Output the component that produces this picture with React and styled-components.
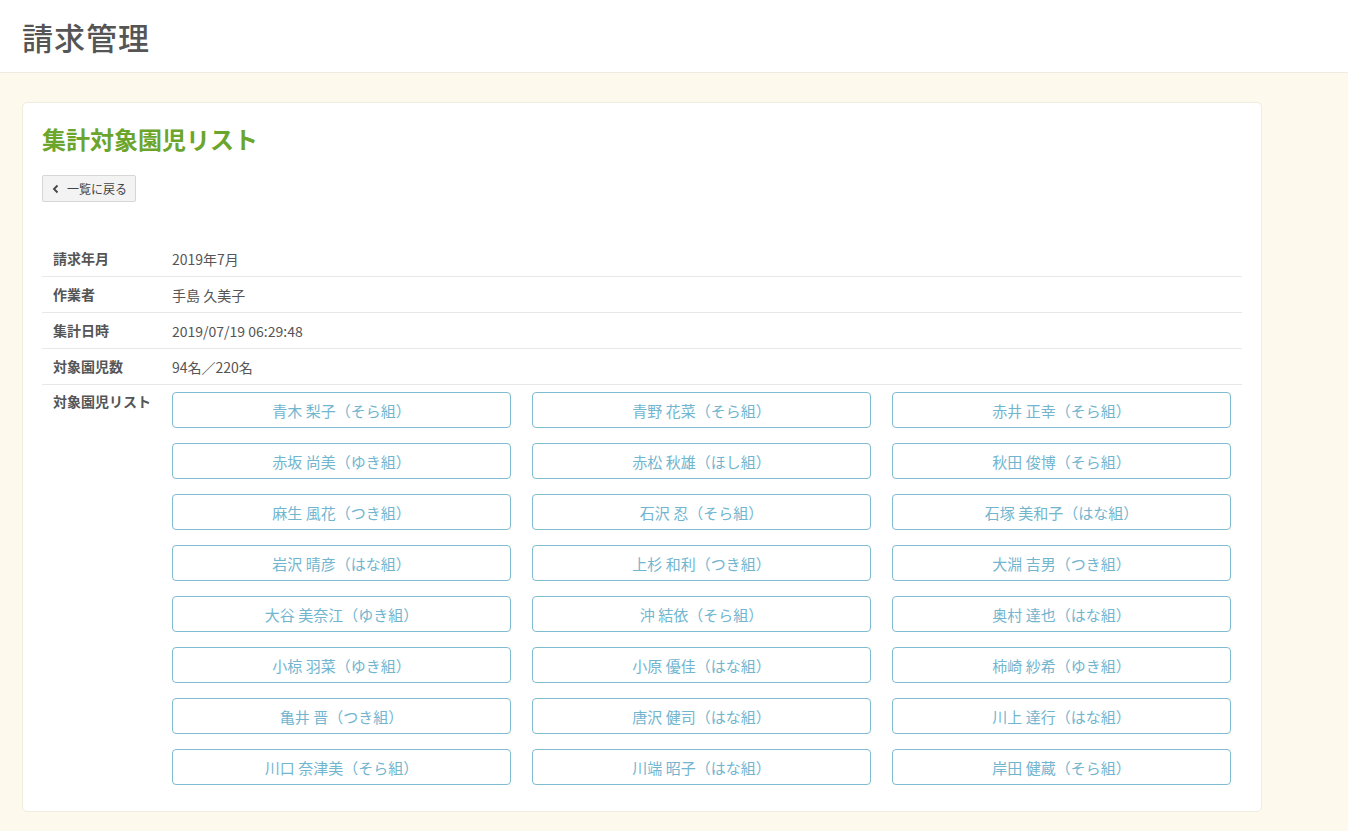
import styled, { createGlobalStyle } from 'styled-components';

const GlobalStyle = createGlobalStyle`
  body {
    margin: 0;
    background: #fdf9ed;
    font-family: "Noto Sans CJK JP", "Noto Sans", sans-serif;
    color: #555;
  }
`;

const children = [
  '青木 梨子（そら組）', '青野 花菜（そら組）', '赤井 正幸（そら組）',
  '赤坂 尚美（ゆき組）', '赤松 秋雄（ほし組）', '秋田 俊博（そら組）',
  '麻生 風花（つき組）', '石沢 忍（そら組）', '石塚 美和子（はな組）',
  '岩沢 晴彦（はな組）', '上杉 和利（つき組）', '大淵 吉男（つき組）',
  '大谷 美奈江（ゆき組）', '沖 結依（そら組）', '奥村 達也（はな組）',
  '小椋 羽菜（ゆき組）', '小原 優佳（はな組）', '柿崎 紗希（ゆき組）',
  '亀井 晋（つき組）', '唐沢 健司（はな組）', '川上 達行（はな組）',
  '川口 奈津美（そら組）', '川端 昭子（はな組）', '岸田 健蔵（そら組）',
];

const info = [
  ['請求年月', '2019年7月'],
  ['作業者', '手島 久美子'],
  ['集計日時', '2019/07/19 06:29:48'],
  ['対象園児数', '94名／220名'],
];

const App = () => (
  <>
    <GlobalStyle />
    <Header>
      <PageTitle>請求管理</PageTitle>
    </Header>
    <Main>
      <Card>
        <CardTitle>集計対象園児リスト</CardTitle>
        <BackButton>
          <svg width="10" height="10" viewBox="0 0 10 10">
            <path d="M6.5 1.5 L3 5 L6.5 8.5" fill="none" stroke="#444" strokeWidth="1.8" />
          </svg>
          一覧に戻る
        </BackButton>
        <Table>
          {info.map(([label, value]) => (
            <Row key={label}>
              <Label>{label}</Label>
              <Value>{value}</Value>
            </Row>
          ))}
          <Row last>
            <Label top>対象園児リスト</Label>
            <Value>
              <ChildGrid>
                {children.map((name) => (
                  <ChildButton key={name}>{name}</ChildButton>
                ))}
              </ChildGrid>
            </Value>
          </Row>
        </Table>
      </Card>
    </Main>
  </>
);

const Header = styled.header`
  height: 72px;
  background: #fff;
  border-bottom: 1px solid #eeebe2;
  display: flex;
  align-items: center;
  padding: 0 22px;
`;

const PageTitle = styled.h1`
  margin: 0;
  font-size: 31px;
  font-weight: 500;
  color: #555;
  letter-spacing: 1px;
`;

const Main = styled.main`
  padding: 29px 86px 40px 22px;
`;

const Card = styled.section`
  background: #fff;
  border: 1px solid #f1ece0;
  border-radius: 5px;
  padding: 20px 19px 26px 19px;
`;

const CardTitle = styled.h2`
  margin: 0;
  height: 32px;
  font-size: 24px;
  font-weight: 700;
  color: #6ca52b;
  line-height: 32px;
`;

const BackButton = styled.button`
  margin-top: 20px;
  display: inline-flex;
  align-items: center;
  gap: 6px;
  height: 27px;
  padding: 0 8px 0 8px;
  background: #f3f3f3;
  border: 1px solid #d6d6d6;
  border-radius: 2px;
  font-family: inherit;
  font-size: 12px;
  color: #444;
`;

const Table = styled.div`
  margin-top: 39px;
  display: flex;
  flex-direction: column;
`;

const Row = styled.div`
  display: grid;
  grid-template-columns: 119px 1fr;
  border-bottom: ${({ last }) => (last ? 'none' : '1px solid #e8e8e8')};
  min-height: 35px;
  align-items: ${({ last }) => (last ? 'start' : 'center')};
`;

const Label = styled.div`
  padding: 0 11px;
  font-size: 14px;
  font-weight: 700;
  color: #555;
  line-height: ${({ top }) => (top ? '36px' : '35px')};
  margin-top: ${({ top }) => (top ? '-2px' : '0')};
  white-space: nowrap;
`;

const Value = styled.div`
  padding: 0 11px;
  font-size: 14px;
  color: #555;
`;

const ChildGrid = styled.div`
  display: grid;
  grid-template-columns: repeat(3, 339px);
  column-gap: 21px;
  row-gap: 15px;
  padding-top: 7px;
`;

const ChildButton = styled.button`
  height: 36px;
  background: #fff;
  border: 1px solid #80bcd0;
  border-radius: 4px;
  font-family: inherit;
  font-size: 15px;
  color: #72b5cf;
  cursor: pointer;
`;

export default App;
